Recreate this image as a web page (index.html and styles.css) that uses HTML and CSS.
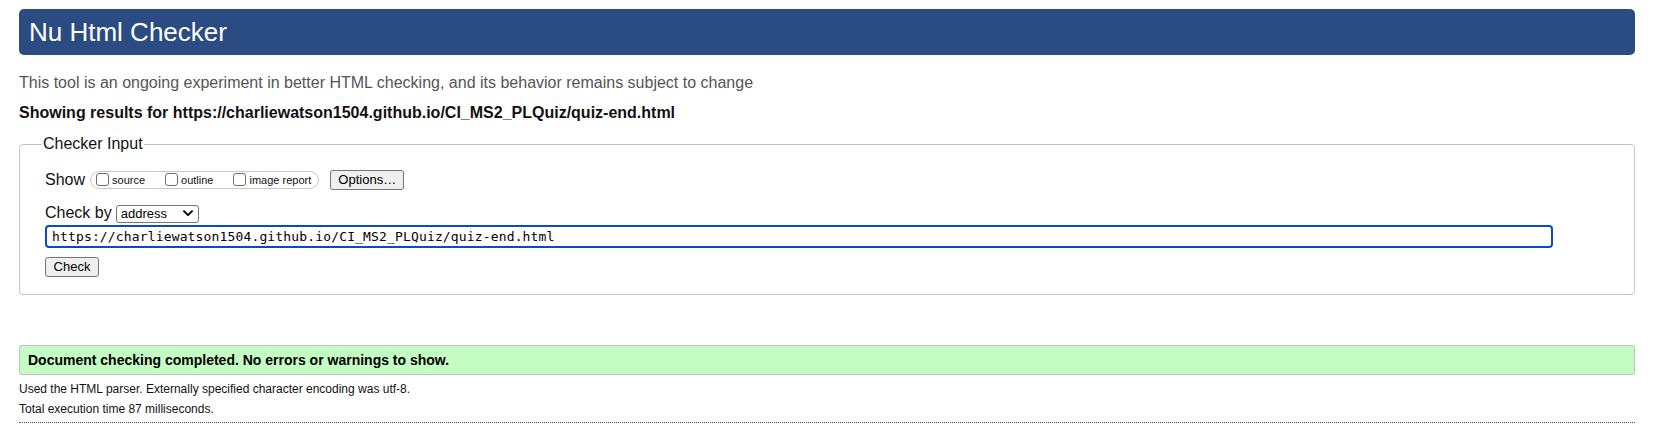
FILE: index.html
```html
<!DOCTYPE html>
<html lang="en">
<head>
<meta charset="utf-8">
<title>Nu Html Checker</title>
<link rel="stylesheet" href="styles.css">
</head>
<body>
<div class="page">
  <h1 class="banner">Nu Html Checker</h1>
  <p class="intro">This tool is an ongoing experiment in better HTML checking, and its behavior remains subject to change</p>
  <p class="showing">Showing results for https://charliewatson1504.github.io/CI_MS2_PLQuiz/quiz-end.html</p>
  <form class="checker">
    <fieldset class="fs">
      <legend class="legend">Checker Input</legend>
      <div class="row row-show">
        <span class="lbl">Show</span>
        <span class="group">
          <label class="opt"><input type="checkbox" class="cb">source</label>
          <label class="opt"><input type="checkbox" class="cb">outline</label>
          <label class="opt"><input type="checkbox" class="cb">image report</label>
        </span>
        <button type="button" class="btn btn-options">Options…</button>
      </div>
      <div class="row row-by">
        <span class="lbl">Check by</span>
        <span class="selwrap">
          <select class="sel"><option>address</option></select>
          <svg class="chev" width="10" height="7" viewBox="0 0 10 7"><path d="M1 1.2 L5 5.2 L9 1.2" fill="none" stroke="#000" stroke-width="1.9" stroke-linecap="round" stroke-linejoin="round"/></svg>
        </span>
      </div>
      <div class="row row-url">
        <input class="url" type="text" value="https://charliewatson1504.github.io/CI_MS2_PLQuiz/quiz-end.html">
      </div>
      <div class="row row-check">
        <button type="button" class="btn btn-check">Check</button>
      </div>
    </fieldset>
  </form>
  <div class="success">Document checking completed. No errors or warnings to show.</div>
  <p class="meta">Used the HTML parser. Externally specified character encoding was utf-8.</p>
  <p class="meta">Total execution time 87 milliseconds.</p>
  <div class="dotted"></div>
</div>
</body>
</html>
```
FILE: styles.css
```css
html, body {
  margin: 0;
  padding: 0;
  background: #fff;
}
body {
  font-family: "Liberation Sans", Arial, Helvetica, sans-serif;
  color: #000;
}
.page {
  margin: 9px 21px 0 19px;
}
.banner {
  margin: 0;
  height: 46px;
  box-sizing: border-box;
  background: #2b4b83;
  color: #fff;
  border-radius: 5px;
  font-size: 26px;
  font-weight: normal;
  line-height: 46px;
  padding-left: 10px;
}
.intro {
  margin: 18px 0 0 0;
  font-size: 16px;
  line-height: 20px;
  color: #555;
}
.showing {
  margin: 10px 0 0 0;
  font-size: 16px;
  line-height: 20px;
  font-weight: bold;
  color: #111;
}
.checker {
  margin: 12px 0 0 0;
}
.fs {
  margin: 0;
  border: 1px solid #c4c4c4;
  border-radius: 4px;
  padding: 17px 0 17px 25px;
  min-width: 0;
}
.legend {
  font-size: 16px;
  line-height: 18px;
  padding: 0 1px;
  margin-left: -3px;
  color: #111;
}
.row {
  display: flex;
  align-items: center;
}
.lbl {
  font-size: 16px;
  color: #111;
}
.row-show {
  height: 20px;
}
.row-show .lbl {
  margin-right: 5px;
}
.group {
  display: inline-flex;
  align-items: center;
  height: 18px;
  box-sizing: border-box;
  border: 1px solid #c8c8c8;
  border-radius: 9px;
  padding: 0 7px 0 5px;
}
.opt {
  display: inline-flex;
  align-items: center;
  font-size: 11px;
  color: #111;
  margin-right: 20px;
}
.opt:last-child {
  margin-right: 0;
}
.cb {
  -webkit-appearance: none;
  appearance: none;
  width: 13px;
  height: 13px;
  box-sizing: border-box;
  border: 1px solid #6d6d6d;
  border-radius: 3px;
  background: #fff;
  margin: 0 3px 0 0;
  position: relative;
  top: -1px;
}
.btn {
  font-family: "Liberation Sans", Arial, Helvetica, sans-serif;
  font-size: 13px;
  color: #000;
  background: #efefef;
  border: 1px solid #767676;
  border-radius: 3px;
  height: 20px;
  box-sizing: border-box;
  padding: 0 7px;
  line-height: 18px;
}
.btn-options {
  margin-left: 11px;
  width: 74px;
}
.btn-check {
  width: 54px;
}
.row-by {
  margin-top: 14px;
  height: 18px;
}
.row-by .lbl {
  margin-right: 4px;
}
.selwrap {
  position: relative;
  display: inline-block;
  height: 18px;
}
.sel {
  -webkit-appearance: none;
  appearance: none;
  width: 83px;
  height: 18px;
  box-sizing: border-box;
  border: 1px solid #767676;
  border-radius: 3px;
  background: #fff;
  font-family: "Liberation Sans", Arial, Helvetica, sans-serif;
  font-size: 13px;
  color: #000;
  padding: 0 0 0 4px;
  margin: 0;
}
.chev {
  position: absolute;
  right: 6px;
  top: 6px;
}
.row-url {
  margin-top: 3px;
}
.url {
  width: 1508px;
  height: 23px;
  box-sizing: border-box;
  border: 2px solid #0a4ac6;
  border-radius: 4px;
  font-family: "DejaVu Sans Mono", "Liberation Mono", monospace;
  font-size: 13px;
  line-height: 17px;
  letter-spacing: 0.15px;
  color: #000;
  padding: 0 0 0 5px;
  margin: 0;
  outline: none;
}
.row-check {
  margin-top: 9px;
}
.success {
  margin-top: 50px;
  height: 30px;
  box-sizing: border-box;
  border: 1px solid #c0c0c0;
  border-radius: 3px;
  background: #c4fcc4;
  font-size: 14px;
  font-weight: bold;
  line-height: 28px;
  padding-left: 8px;
  color: #000;
}
.meta {
  margin: 0;
  font-size: 12px;
  line-height: 20px;
  color: #111;
}
.success + .meta {
  margin-top: 4px;
}
.dotted {
  margin-top: 3px;
  border-top: 1px dotted #555;
}
```
